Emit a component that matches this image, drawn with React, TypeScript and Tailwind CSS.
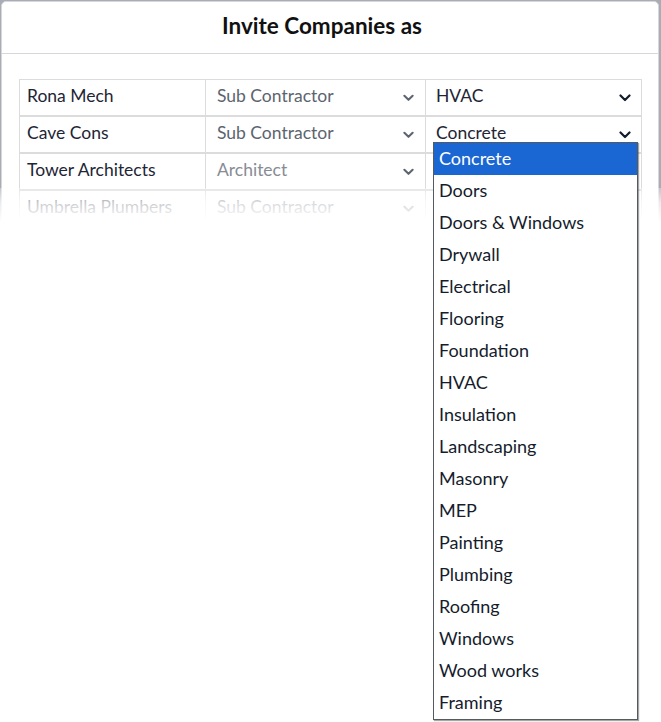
import React from "react";

const rows = [
  { name: "Rona Mech", role: "Sub Contractor", trade: "HVAC", roleMuted: false },
  { name: "Cave Cons", role: "Sub Contractor", trade: "Concrete", roleMuted: false },
  { name: "Tower Architects", role: "Architect", trade: "", roleMuted: true },
  { name: "Umbrella Plumbers", role: "Sub Contractor", trade: "", roleMuted: false },
];

const trades = [
  "Concrete",
  "Doors",
  "Doors & Windows",
  "Drywall",
  "Electrical",
  "Flooring",
  "Foundation",
  "HVAC",
  "Insulation",
  "Landscaping",
  "Masonry",
  "MEP",
  "Painting",
  "Plumbing",
  "Roofing",
  "Windows",
  "Wood works",
  "Framing",
];

function Chevron({ className }: { className: string }) {
  return (
    <svg viewBox="0 0 12 8" className={className} fill="none" stroke="currentColor" strokeWidth="2.2" strokeLinecap="round" strokeLinejoin="round">
      <path d="M1.5 1.5 6 6l4.5-4.5" />
    </svg>
  );
}

export default function App() {
  return (
    <div
      className="relative w-[661px] h-[722px] bg-white overflow-hidden"
      style={{ fontFamily: "Lato, 'Noto Sans', sans-serif" }}
    >
      {/* modal, clipped and faded at the bottom */}
      <div className="relative h-[222px] overflow-hidden bg-[#a9adb3] pl-px pt-px pr-[2px]">
        <div className="h-full rounded-t-[5px] bg-white border border-[#d4d7dc]">
          <div className="h-[52px] border-b border-[#d4d7dc] flex items-center justify-center pr-[16px] pb-[3px]">
            <h2 className="text-[22.5px] font-bold text-[#111111]">Invite Companies as</h2>
          </div>
          <div className="pt-[25px] pl-[17px] pr-[16px]">
            {rows.map((r) => (
              <div key={r.name} className="flex h-[37px] border border-[#dcdcdc] text-[17.5px] leading-none">
                <div className="w-[185px] pl-[7px] pb-[3px] flex items-center text-[#1e2535]">{r.name}</div>
                <div className="w-[220px] border-l border-[#dcdcdc] pl-[11px] pr-[11px] flex items-center justify-between">
                  <span className={"pb-[3px] " + (r.roleMuted ? "text-[#878c94]" : "text-[#5c6470]")}>{r.role}</span>
                  <Chevron className="w-[11px] h-[8px] text-[#5c6470]" />
                </div>
                <div className="flex-1 border-l border-[#dcdcdc] pl-[10px] pr-[10px] flex items-center justify-between">
                  <span className="pb-[3px] text-[#1e2535]">{r.trade}</span>
                  <Chevron className="w-[12px] h-[8px] text-[#141b2b]" />
                </div>
              </div>
            ))}
          </div>
        </div>
        {/* fade into the page below */}
        <div className="absolute left-0 right-0 top-[188px] h-[14px] bg-gradient-to-b from-white/30 to-white/75" />
        <div className="absolute left-0 right-0 top-[202px] h-[20px] bg-gradient-to-b from-white/75 to-white" />
      </div>

      {/* open trade list */}
      <ul className="absolute left-[433px] top-[142px] w-[205px] border border-[#555a60] bg-white shadow-[1px_1px_1px_rgba(0,0,0,0.35)]">
        {trades.map((t, i) => (
          <li
            key={t}
            className={
              "h-[32px] pl-[5px] pb-[1px] flex items-center text-[18px] " +
              (i === 0 ? "bg-[#1a66d2] text-white" : "text-[#151c2c]")
            }
          >
            {t}
          </li>
        ))}
      </ul>
    </div>
  );
}
